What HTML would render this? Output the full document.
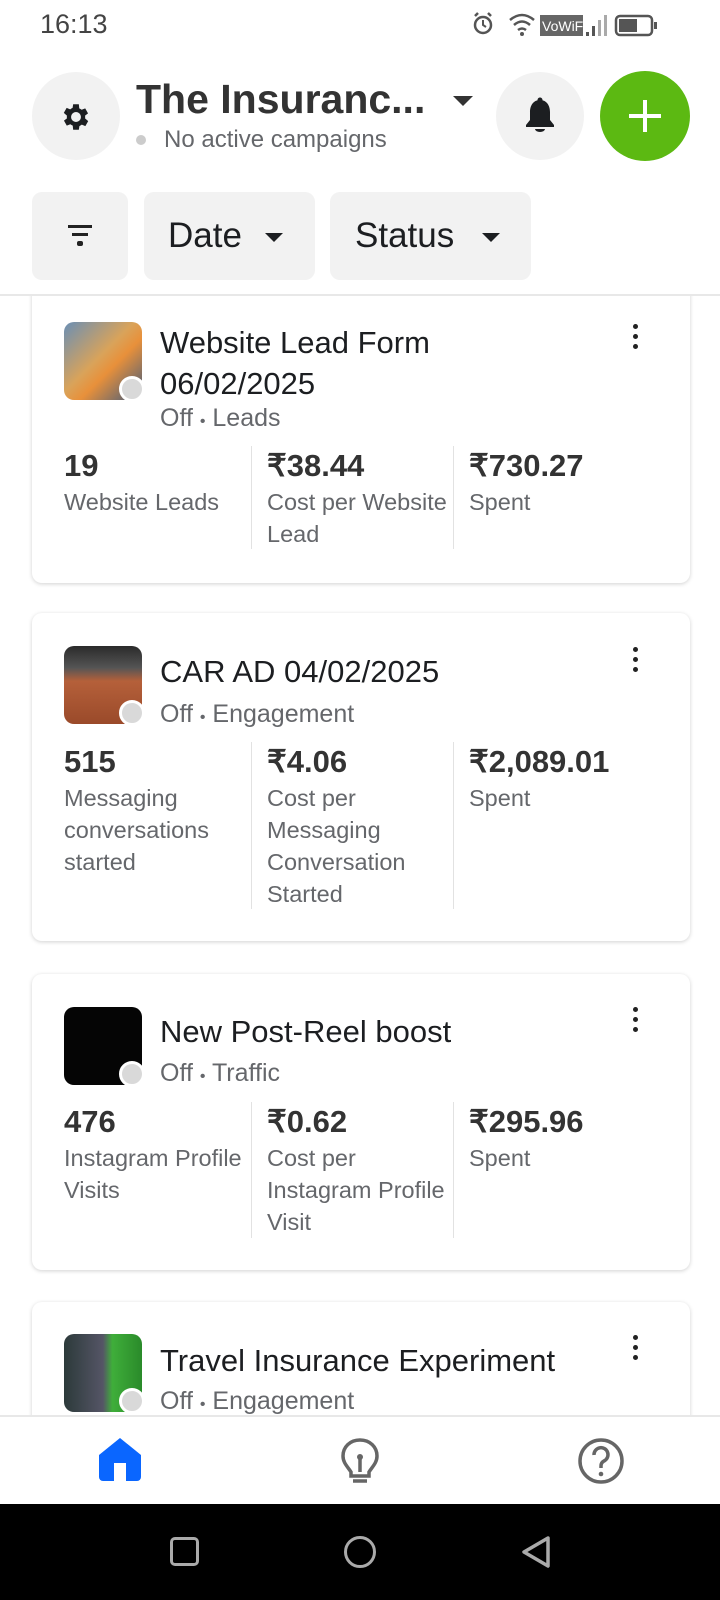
<!DOCTYPE html>
<html><head><meta charset="utf-8"><style>
*{margin:0;padding:0;box-sizing:border-box}
body{width:720px;height:1600px;position:relative;overflow:hidden;background:#fff;font-family:"Liberation Sans",sans-serif;color:#1c1e21}
.a{position:absolute;white-space:nowrap}
.card{position:absolute;left:32px;width:658px;background:#fff;border-radius:10px;box-shadow:0 1px 4px rgba(0,0,0,.18)}
.t{font-size:31px;line-height:41px;color:#1c1e21}
.s{font-size:25px;line-height:30px;color:#65676b}
.n{font-size:31px;line-height:34px;font-weight:bold;color:#333}
.l{font-size:23.5px;line-height:32px;color:#65676b}
.th{position:absolute;left:64px;width:78px;height:78px;border-radius:10px;overflow:hidden}
.dot{position:absolute;width:26px;height:26px;border-radius:50%;background:#d9d9d9;border:3px solid #fff}
.dv{position:absolute;width:1px;background:#e2e2e2}
.menu{position:absolute;left:633px;width:5px}
.menu i{display:block;width:5px;height:5px;border-radius:50%;background:#222;margin-bottom:5px}
</style></head><body>

<div class="card" style="top:260px;height:323px"></div>
<div class="th" style="top:322px;background:linear-gradient(135deg,#6a8fb5 0%,#d9a35a 45%,#e8903a 60%,#3d5a80 100%)"></div>
<div class="dot" style="left:119px;top:376px"></div>
<div class="a t" style="left:160px;top:322px">Website Lead Form</div>
<div class="a t" style="left:160px;top:363px">06/02/2025</div>
<div class="a s" style="left:160px;top:403px">Off <span style="font-size:16px">•</span> Leads</div>
<div class="a n" style="left:64px;top:449px">19</div>
<div class="a n" style="left:267px;top:449px">₹38.44</div>
<div class="a n" style="left:469px;top:449px">₹730.27</div>
<div class="a l" style="left:64px;top:486px">Website Leads</div>
<div class="a l" style="left:267px;top:486px">Cost per Website<br>Lead</div>
<div class="a l" style="left:469px;top:486px">Spent</div>
<div class="dv" style="left:251px;top:446px;height:103px"></div>
<div class="dv" style="left:453px;top:446px;height:103px"></div>
<div class="menu" style="top:324px"><i></i><i></i><i></i></div>

<div class="card" style="top:613px;height:328px"></div>
<div class="th" style="top:646px;background:linear-gradient(180deg,#2a2a2a 0%,#555 28%,#b5603a 45%,#9a4a2a 100%)"></div>
<div class="dot" style="left:119px;top:700px"></div>
<div class="a t" style="left:160px;top:651px">CAR AD 04/02/2025</div>
<div class="a s" style="left:160px;top:699px">Off <span style="font-size:16px">•</span> Engagement</div>
<div class="a n" style="left:64px;top:745px">515</div>
<div class="a n" style="left:267px;top:745px">₹4.06</div>
<div class="a n" style="left:469px;top:745px">₹2,089.01</div>
<div class="a l" style="left:64px;top:782px">Messaging<br>conversations<br>started</div>
<div class="a l" style="left:267px;top:782px">Cost per<br>Messaging<br>Conversation<br>Started</div>
<div class="a l" style="left:469px;top:782px">Spent</div>
<div class="dv" style="left:251px;top:742px;height:167px"></div>
<div class="dv" style="left:453px;top:742px;height:167px"></div>
<div class="menu" style="top:647px"><i></i><i></i><i></i></div>

<div class="card" style="top:974px;height:296px"></div>
<div class="th" style="top:1007px;background:#050505"></div>
<div class="dot" style="left:119px;top:1061px"></div>
<div class="a t" style="left:160px;top:1011px">New Post-Reel boost</div>
<div class="a s" style="left:160px;top:1058px">Off <span style="font-size:16px">•</span> Traffic</div>
<div class="a n" style="left:64px;top:1105px">476</div>
<div class="a n" style="left:267px;top:1105px">₹0.62</div>
<div class="a n" style="left:469px;top:1105px">₹295.96</div>
<div class="a l" style="left:64px;top:1142px">Instagram Profile<br>Visits</div>
<div class="a l" style="left:267px;top:1142px">Cost per<br>Instagram Profile<br>Visit</div>
<div class="a l" style="left:469px;top:1142px">Spent</div>
<div class="dv" style="left:251px;top:1102px;height:136px"></div>
<div class="dv" style="left:453px;top:1102px;height:136px"></div>
<div class="menu" style="top:1007px"><i></i><i></i><i></i></div>

<div class="card" style="top:1302px;height:200px"></div>
<div class="th" style="top:1334px;background:linear-gradient(90deg,#2c3a3a 0%,#556 50%,#3fae3a 62%,#2a8a2a 100%)"></div>
<div class="dot" style="left:119px;top:1388px"></div>
<div class="a t" style="left:160px;top:1340px">Travel Insurance Experiment</div>
<div class="a s" style="left:160px;top:1386px">Off <span style="font-size:16px">•</span> Engagement</div>
<div class="menu" style="top:1335px"><i></i><i></i><i></i></div>

<div style="position:absolute;left:0;top:0;width:720px;height:296px;background:#fff;border-bottom:2px solid #e8e8e8"></div>
<div class="a" style="left:40px;top:9px;font-size:27px;color:#444">16:13</div>
<svg class="a" style="left:468px;top:10px" width="200" height="30" viewBox="0 0 200 30">
<circle cx="15" cy="15" r="8" fill="none" stroke="#555" stroke-width="2.5"/><path d="M15 10v5l3 2" stroke="#555" stroke-width="2" fill="none"/><path d="M7 6l3-3M23 6l-3-3" stroke="#555" stroke-width="2.5"/>
<path d="M42 10q12-10 24 0M46 15q8-7 16 0M50 20q4-3 8 0" stroke="#555" stroke-width="2.5" fill="none"/><circle cx="54" cy="24" r="2" fill="#555"/>
<rect x="72" y="5" width="43" height="21" fill="#666"/><text x="74" y="21" font-size="14" fill="#fff" font-family="Liberation Sans">VoWiFi</text>
<rect x="118" y="22" width="3" height="4" fill="#555"/><rect x="124" y="16" width="3" height="10" fill="#555"/><rect x="130" y="10" width="3" height="16" fill="#aaa"/><rect x="136" y="5" width="3" height="21" fill="#aaa"/>
<rect x="148" y="6" width="36" height="19" rx="4" fill="none" stroke="#555" stroke-width="2.5"/><rect x="151" y="9" width="18" height="13" fill="#555"/><rect x="186" y="12" width="3" height="7" fill="#555"/>
</svg>

<div class="a" style="left:32px;top:72px;width:88px;height:88px;border-radius:50%;background:#f2f2f2"></div>
<svg class="a" style="left:59px;top:100px" width="34" height="34" viewBox="0 0 24 24"><path fill="#1c1e21" fill-rule="evenodd" d="M19.4 13a7.5 7.5 0 0 0 0-2l2.1-1.6-2-3.5-2.5 1a7 7 0 0 0-1.7-1L15 3h-4l-.4 2.6a7 7 0 0 0-1.7 1l-2.5-1-2 3.5L6.6 11a7.5 7.5 0 0 0 0 2l-2.1 1.6 2 3.5 2.5-1a7 7 0 0 0 1.7 1L11 21h4l.4-2.6a7 7 0 0 0 1.7-1l2.5 1 2-3.5zM13 15.5a3.5 3.5 0 1 1 0-7 3.5 3.5 0 0 1 0 7z" transform="translate(-1 0)"/></svg>
<div class="a" style="left:136px;top:71px;font-size:41px;font-weight:bold;color:#333;line-height:56px">The Insuranc...</div>
<div class="a" style="left:453px;top:96px;width:0;height:0;border-left:10px solid transparent;border-right:10px solid transparent;border-top:10px solid #333"></div>
<div class="a" style="left:136px;top:135px;width:10px;height:10px;border-radius:50%;background:#ccc"></div>
<div class="a" style="left:164px;top:125px;font-size:24px;color:#65676b;line-height:30px">No active campaigns</div>
<div class="a" style="left:496px;top:72px;width:88px;height:88px;border-radius:50%;background:#f2f2f2"></div>
<svg class="a" style="left:522px;top:96px" width="36" height="40" viewBox="0 0 36 40"><path d="M18 4c-7 0-10 6-10 12v8l-4 5v2h28v-2l-4-5v-8c0-6-3-12-10-12z" fill="#1c1e21"/><circle cx="18" cy="4" r="2.5" fill="#1c1e21"/><path d="M13 33h10a5 3 0 0 1-10 0z" fill="#1c1e21"/></svg>
<div class="a" style="left:600px;top:71px;width:90px;height:90px;border-radius:50%;background:#5cb912"></div>
<div class="a" style="left:629px;top:114px;width:32px;height:4px;background:#fff"></div>
<div class="a" style="left:643px;top:100px;width:4px;height:32px;background:#fff"></div>

<div class="a" style="left:32px;top:192px;width:96px;height:88px;border-radius:10px;background:#f2f2f2"></div>
<div class="a" style="left:68px;top:225px;width:24px;height:3px;background:#222"></div>
<div class="a" style="left:72px;top:233px;width:16px;height:3px;background:#222"></div>
<div class="a" style="left:77px;top:241px;width:6px;height:5px;border-radius:2px;background:#222"></div>
<div class="a" style="left:144px;top:192px;width:171px;height:88px;border-radius:10px;background:#f2f2f2"></div>
<div class="a" style="left:168px;top:216px;font-size:35px;line-height:40px;color:#1c1e21">Date</div>
<div class="a" style="left:265px;top:233px;width:0;height:0;border-left:9px solid transparent;border-right:9px solid transparent;border-top:9px solid #1c1e21"></div>
<div class="a" style="left:330px;top:192px;width:201px;height:88px;border-radius:10px;background:#f2f2f2"></div>
<div class="a" style="left:355px;top:216px;font-size:35px;line-height:40px;color:#1c1e21">Status</div>
<div class="a" style="left:482px;top:233px;width:0;height:0;border-left:9px solid transparent;border-right:9px solid transparent;border-top:9px solid #1c1e21"></div>

<div style="position:absolute;left:0;top:1415px;width:720px;height:89px;background:#fff;border-top:2px solid #e8e8e8"></div>
<svg class="a" style="left:97px;top:1437px" width="46" height="46" viewBox="0 0 46 46"><path d="M23 1L2 18v22a4 4 0 0 0 4 4h34a4 4 0 0 0 4-4V18z" fill="#0a66ff"/><rect x="17" y="26" width="12" height="18" fill="#fff"/></svg>
<svg class="a" style="left:340px;top:1437px" width="40" height="48" viewBox="0 0 40 48"><path d="M20 3C10 3 3 10 3 19c0 7 5 11 8 16v4h18v-4c3-5 8-9 8-16 0-9-7-16-17-16z" fill="none" stroke="#666" stroke-width="3.5"/><path d="M20 21v14" stroke="#666" stroke-width="3.5"/><circle cx="20" cy="20" r="3" fill="#666"/><path d="M13 44h14" stroke="#666" stroke-width="3.5"/></svg>
<svg class="a" style="left:577px;top:1437px" width="48" height="48" viewBox="0 0 48 48"><circle cx="24" cy="24" r="21" fill="none" stroke="#666" stroke-width="3.5"/><path d="M17 18a7 7 0 1 1 10 6c-2 1-3 3-3 5v2" fill="none" stroke="#666" stroke-width="3.5"/><circle cx="24" cy="37" r="2.3" fill="#666"/></svg>

<div style="position:absolute;left:0;top:1504px;width:720px;height:96px;background:#000"></div>
<div class="a" style="left:170px;top:1537px;width:29px;height:29px;border:3.5px solid #aaa;border-radius:5px"></div>
<div class="a" style="left:344px;top:1536px;width:32px;height:32px;border:3.5px solid #aaa;border-radius:50%"></div>
<svg class="a" style="left:520px;top:1535px" width="32" height="34" viewBox="0 0 32 34"><path d="M28 3L4 17l24 14z" fill="none" stroke="#aaa" stroke-width="3.5" stroke-linejoin="round"/></svg>
</body></html>
